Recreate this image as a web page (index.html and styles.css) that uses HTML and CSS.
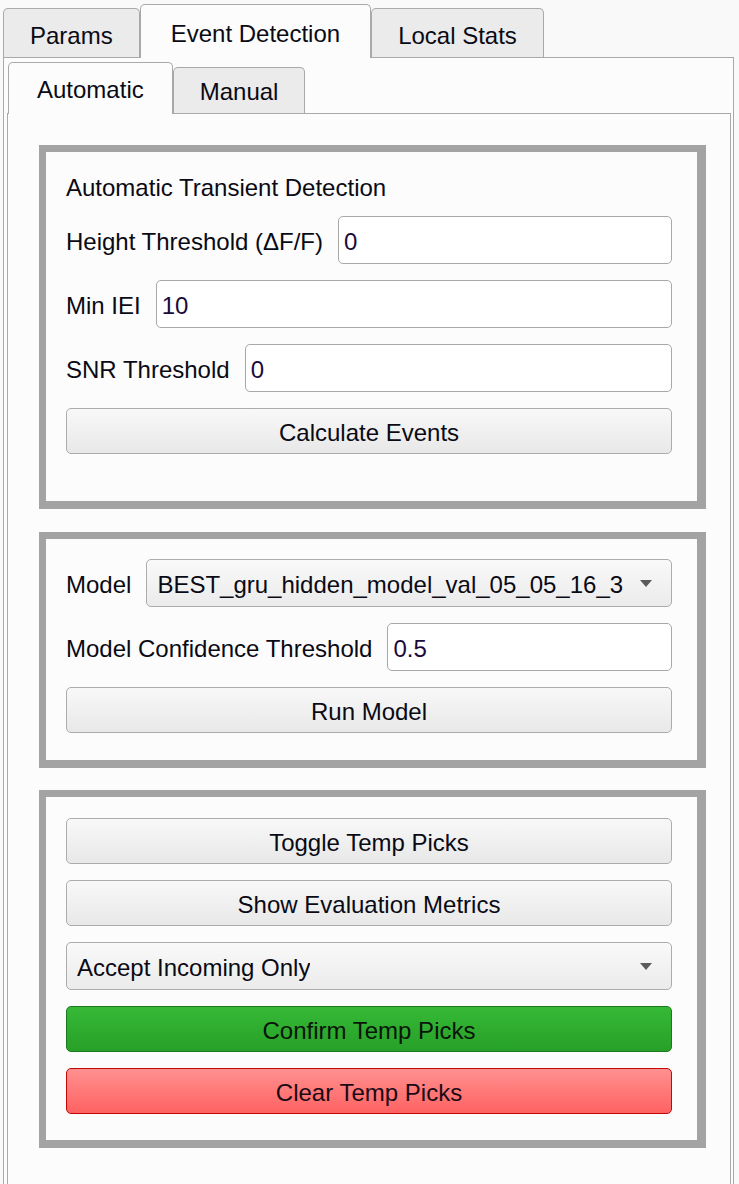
FILE: index.html
```html
<!DOCTYPE html>
<html lang="en">
<head>
    <meta charset="UTF-8">
    <meta name="viewport" content="width=device-width, initial-scale=1.0">
    <title>Event Detection</title>
    <link rel="stylesheet" href="styles.css">
</head>
<body>
    <div class="tabs outer-tabs">
        <div class="tab">Params</div>
        <div class="tab active">Event Detection</div>
        <div class="tab">Local Stats</div>
    </div>
    <div class="pane outer-pane">
        <div class="tabs inner-tabs">
            <div class="tab active">Automatic</div>
            <div class="tab">Manual</div>
        </div>
        <div class="pane inner-pane">
            <div class="frame first">
                <div class="title">Automatic Transient Detection</div>
                <div class="row">
                    <label>Height Threshold (ΔF/F)</label>
                    <input type="text" value="0">
                </div>
                <div class="row">
                    <label>Min IEI</label>
                    <input type="text" value="10">
                </div>
                <div class="row">
                    <label>SNR Threshold</label>
                    <input type="text" value="0">
                </div>
                <button class="btn">Calculate Events</button>
            </div>

            <div class="frame second">
                <div class="row">
                    <label>Model</label>
                    <div class="combo"><span class="combo-text">BEST_gru_hidden_model_val_05_05_16_3</span><span class="arrow"></span></div>
                </div>
                <div class="row">
                    <label>Model Confidence Threshold</label>
                    <input type="text" value="0.5">
                </div>
                <button class="btn">Run Model</button>
            </div>

            <div class="frame third">
                <button class="btn">Toggle Temp Picks</button>
                <button class="btn">Show Evaluation Metrics</button>
                <div class="combo"><span class="combo-text">Accept Incoming Only</span><span class="arrow"></span></div>
                <button class="btn confirm">Confirm Temp Picks</button>
                <button class="btn clear">Clear Temp Picks</button>
            </div>
        </div>
    </div>
</body>
</html>
```

FILE: styles.css
```css
* {
    box-sizing: border-box;
}

body {
    margin: 0;
    height: 100vh;
    overflow: hidden;
    display: flex;
    flex-direction: column;
    background: #f9f9f9;
    font-family: "Liberation Sans", Arial, sans-serif;
    font-size: 24px;
    color: #0a0a14;
}

/* tab bars */
.tabs {
    display: flex;
    align-items: flex-end;
    flex: none;
}

.tab {
    background: #ebebeb;
    border: 1px solid #a9a9a9;
    border-bottom: none;
    border-radius: 5px 5px 0 0;
    white-space: nowrap;
    text-align: center;
}

.tab.active {
    background: #fcfcfc;
    position: relative;
    z-index: 1;
    margin-bottom: -1px;
}

.outer-tabs {
    padding: 4px 0 0 3px;
}

.outer-tabs .tab {
    height: 49px;
    padding: 6px 26px 0;
    line-height: 42px;
}

.outer-tabs .tab.active {
    height: 54px;
    padding: 8px 30px 0;
    line-height: 42px;
}

.inner-tabs {
    padding-left: 1px;
}

.inner-tabs .tab {
    height: 46px;
    line-height: 48px;
    padding: 0 26px;
}

.inner-tabs .tab.active {
    height: 52px;
    line-height: 54px;
    padding: 0 28px;
}

/* panes, open at the bottom: they run on past the window */
.pane {
    background: #fcfcfc;
    border: 1px solid #a9a9a9;
    border-bottom: none;
    flex: 1;
    min-height: 0;
}

.outer-pane {
    display: flex;
    flex-direction: column;
    margin: 0 5px 0 3px;
    padding: 4px 2px 0 3px;
}

.inner-pane {
    padding: 31px 24px 0 31px;
}

/* group frames */
.frame {
    display: flex;
    flex-direction: column;
    gap: 16px;
    border-style: solid;
    border-color: #a3a3a3;
    border-width: 7px 9px 8px 7px;
    background: #fcfcfc;
    padding: 0 25px 0 20px;
}

.frame.first {
    padding-top: 24px;
    padding-bottom: 47px;
}

.frame.second {
    margin-top: 23px;
    padding-top: 20px;
    padding-bottom: 27px;
}

.frame.third {
    margin-top: 22px;
    padding-top: 21px;
    padding-bottom: 26px;
}

.title {
    line-height: 24px;
}

.row {
    display: flex;
    align-items: center;
    gap: 15px;
}

.row label {
    white-space: nowrap;
    padding-top: 4px;
}

.row input,
.row .combo {
    flex: 1;
    min-width: 0;
}

input {
    height: 48px;
    border: 1px solid #a8a8a8;
    border-radius: 5px;
    background: #fff;
    padding: 3px 5px 0;
    font-family: inherit;
    font-size: 24px;
    color: #1a0a3a;
    outline: none;
}

.btn {
    height: 46px;
    width: 100%;
    border: 1px solid #acacac;
    border-radius: 5px;
    background: linear-gradient(#f8f8f8, #e8e8e8);
    font-family: inherit;
    font-size: 24px;
    color: #0a0a14;
    padding: 3px 0 0;
}

.combo {
    height: 48px;
    display: flex;
    align-items: center;
    justify-content: space-between;
    border: 1px solid #acacac;
    border-radius: 5px;
    background: linear-gradient(#f9f9f9, #ebebeb);
    padding: 3px 19px 0 10px;
    overflow: hidden;
}

.combo-text {
    white-space: nowrap;
    overflow: hidden;
}

.arrow {
    flex: none;
    margin: 0 0 3px 12px;
    width: 0;
    height: 0;
    border-left: 6px solid transparent;
    border-right: 6px solid transparent;
    border-top: 7px solid #5a5a5a;
}

.btn.confirm {
    border-color: #1c781c;
    background: linear-gradient(#36b936, #27a027);
    color: #0a140a;
}

.btn.clear {
    border-color: #c40808;
    background: linear-gradient(#ff9090, #ff6262);
    color: #1a0a14;
}
```
